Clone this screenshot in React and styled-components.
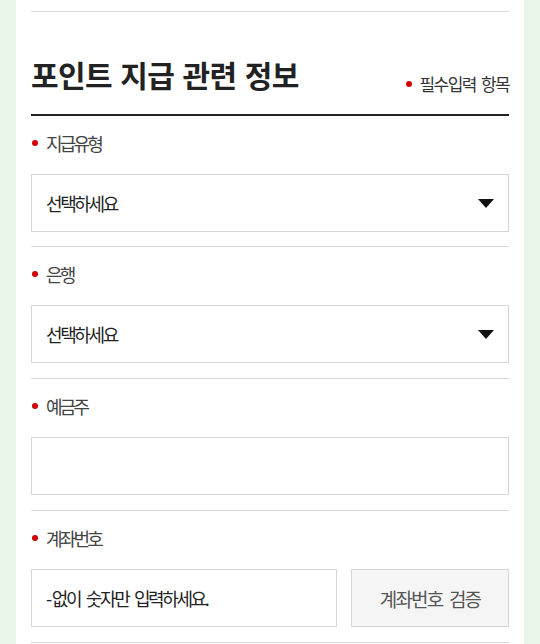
import React from "react";
import styled, { createGlobalStyle } from "styled-components";

const Global = createGlobalStyle`
  html, body { margin: 0; padding: 0; background: #e8f5e8; }
  body { font-family: "Noto Sans CJK KR", "Noto Sans", sans-serif; }
  * { box-sizing: border-box; }
`;

const Page = styled.div`
  background: #e8f5e8;
  padding: 0 16px;
  min-height: 644px;
`;

const Panel = styled.section`
  background: #fff;
  padding: 11px 15px 0;
  min-height: 644px;
`;

const TopRule = styled.div`
  border-top: 1px solid #d9d9d9;
`;

const Header = styled.div`
  display: flex;
  justify-content: space-between;
  align-items: flex-end;
  padding: 42px 0 20px;
  border-bottom: 2px solid #222;
`;

const Title = styled.h2`
  margin: 0;
  font-size: 30px;
  line-height: 40px;
  font-weight: 700;
  color: #222;
  letter-spacing: -0.6px;
  word-spacing: 2px;
`;

const Dot = styled.span`
  display: inline-block;
  width: 6px;
  height: 6px;
  border-radius: 50%;
  background: #d10000;
  margin-right: ${(p) => p.$gap || 7}px;
  flex: none;
`;

const Required = styled.span`
  display: flex;
  align-items: center;
  font-size: 17px;
  line-height: 20px;
  color: #333;
  letter-spacing: -1.6px;
  word-spacing: 3px;
  white-space: pre;
`;

const Field = styled.div`
  padding: 12px 0 ${(p) => (p.$first ? 14 : 15)}px;
  border-bottom: 1px solid #d9d9d9;
`;

const Label = styled.div`
  display: flex;
  align-items: center;
  height: 30px;
  margin-bottom: 16px;
  padding-left: 1px;
  font-size: 18px;
  color: #444;
  letter-spacing: -2.8px;
`;

const Box = styled.div`
  display: flex;
  align-items: center;
  height: 58px;
  padding: 0 14px;
  border: 1px solid #d6d6d6;
  background: ${(p) => (p.$muted ? "#f5f5f5" : "#fff")};
  font-size: 18px;
  color: #222;
  letter-spacing: -2.4px;
  word-spacing: 4px;
  white-space: pre;
  justify-content: ${(p) => (p.$center ? "center" : "flex-start")};
  flex: ${(p) => p.$grow || "none"};
  width: ${(p) => p.$width || "auto"};
`;

const SelectBox = styled(Box)`
  justify-content: space-between;
`;

const Arrow = styled.svg`
  width: 16px;
  height: 9px;
  display: block;
`;

const ButtonBox = styled(Box).attrs({ as: "button" })`
  font-family: inherit;
  color: #555;
  font-size: 19px;
  letter-spacing: -1.8px;
  cursor: pointer;
`;

const Row = styled.div`
  display: flex;
  gap: 14px;
`;

const Hyphen = styled.span`
  margin-right: 2px;
`;

function FieldLabel({ children }) {
  return (
    <Label>
      <Dot $gap={8} />
      {children}
    </Label>
  );
}

function Select() {
  return (
    <SelectBox>
      <span>선택하세요</span>
      <Arrow viewBox="0 0 16 9">
        <path d="M0 0 H16 L8 9 Z" fill="#111" />
      </Arrow>
    </SelectBox>
  );
}

export default function App() {
  return (
    <>
      <Global />
      <Page>
        <Panel>
          <TopRule />
          <Header>
            <Title>포인트 지급 관련 정보</Title>
            <Required>
              <Dot $gap={8} />
              필수입력 항목
            </Required>
          </Header>
          <Field $first>
            <FieldLabel>지급유형</FieldLabel>
            <Select />
          </Field>
          <Field>
            <FieldLabel>은행</FieldLabel>
            <Select />
          </Field>
          <Field>
            <FieldLabel>예금주</FieldLabel>
            <Box />
          </Field>
          <Field>
            <FieldLabel>계좌번호</FieldLabel>
            <Row>
              <Box $grow="1">
                <Hyphen>-</Hyphen>없이 숫자만 입력하세요.
              </Box>
              <ButtonBox $muted $center $width="158px">
                계좌번호 검증
              </ButtonBox>
            </Row>
          </Field>
        </Panel>
      </Page>
    </>
  );
}
